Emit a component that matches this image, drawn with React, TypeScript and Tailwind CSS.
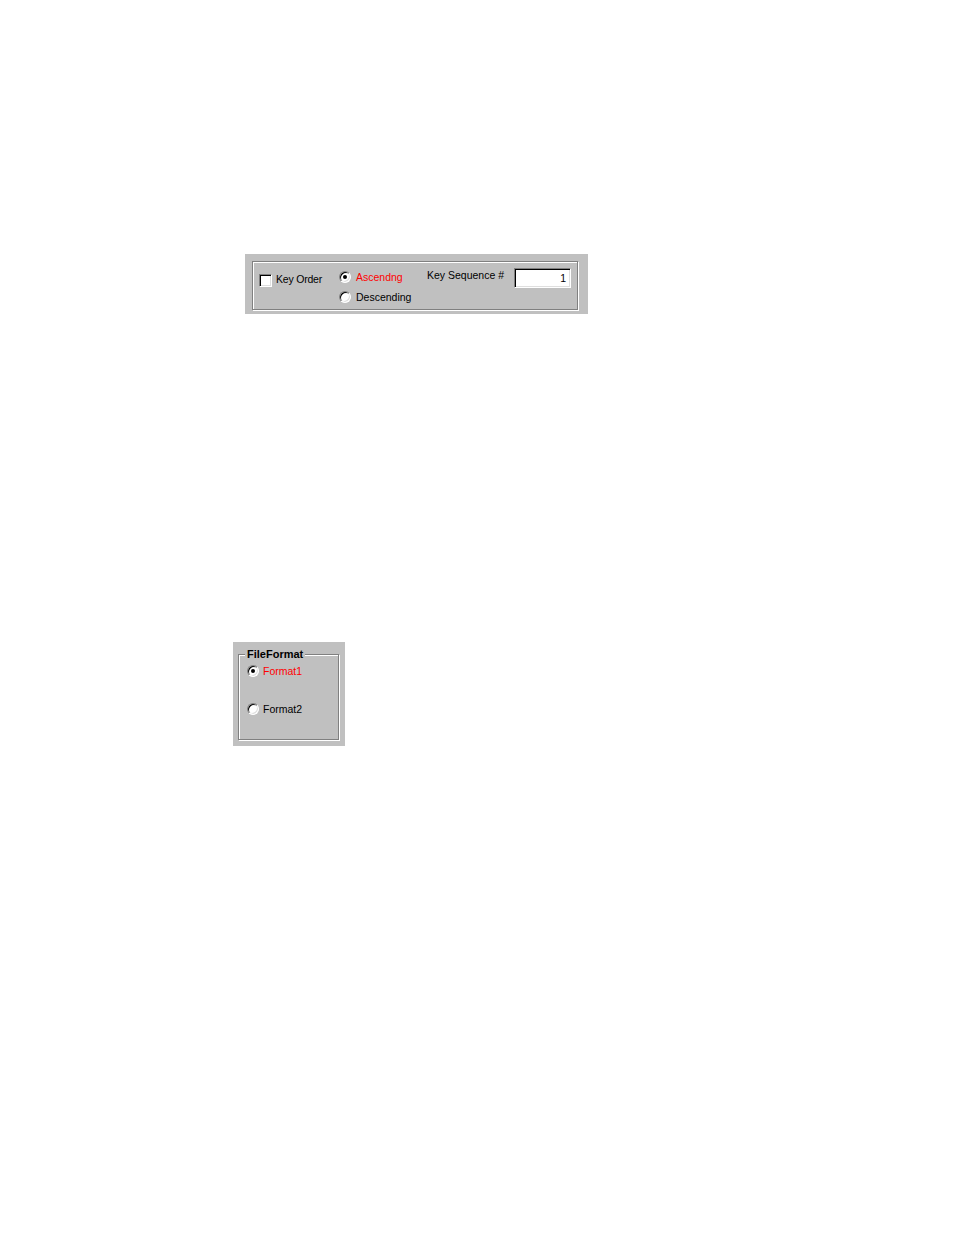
import React from 'react';

const etched = 'border border-[#808080] shadow-[inset_1px_1px_0_#ffffff,1px_1px_0_#ffffff]';
const sunken =
  'border border-t-[#808080] border-l-[#808080] border-r-white border-b-white bg-white shadow-[inset_1px_1px_0_#000000,inset_-1px_-1px_0_#dfdfdf]';

function Radio({ checked }: { checked?: boolean }) {
  return (
    <span
      className={`flex h-[12px] w-[12px] shrink-0 items-center justify-center rounded-full ${sunken}`}
    >
      {checked && <span className="h-[4px] w-[4px] rounded-full bg-black" />}
    </span>
  );
}

function Checkbox() {
  return <span className={`block h-[13px] w-[13px] shrink-0 ${sunken}`} />;
}

export default function App() {
  return (
    <div className="min-h-[1235px] w-[954px] bg-white font-['Liberation_Sans',Arial,sans-serif] text-[10.5px] leading-[12px] text-black">
      {/* Key order panel */}
      <div className="pl-[245px] pt-[254px]">
        <div className="h-[60px] w-[343px] bg-[#c0c0c0] pl-[7px] pt-[7px]">
          <div className={`flex h-[49px] w-[326px] items-start pl-[6px] ${etched}`}>
            <div className="mt-[11px] flex w-[80px] items-center gap-[4px]">
              <Checkbox />
              <span className="pb-[3px] tracking-[-0.2px]">Key Order</span>
            </div>
            <div className="mt-[9px] flex w-[88px] flex-col gap-[8px]">
              <div className="flex h-[12px] items-center gap-[5px]">
                <Radio checked />
                <span className="pb-[1px] text-[#ff0000]">Ascendng</span>
              </div>
              <div className="flex h-[12px] items-center gap-[5px]">
                <Radio />
                <span>Descending</span>
              </div>
            </div>
            <div className="mt-[6px] flex h-[14px] w-[87px] items-center">Key Sequence #</div>
            <div className={`mt-[6px] flex h-[20px] w-[57px] items-center justify-end pr-[4px] ${sunken}`}>
              1
            </div>
          </div>
        </div>
      </div>

      {/* File format panel */}
      <div className="pl-[233px] pt-[328px]">
        <div className="h-[104px] w-[112px] bg-[#c0c0c0] pl-[5px] pt-[12px]">
          <div className={`relative h-[86px] w-[101px] ${etched}`}>
            <span className="absolute left-[6px] top-[-7px] bg-[#c0c0c0] px-[2px] text-[11px] font-bold leading-[13px]">
              FileFormat
            </span>
            <div className="flex flex-col gap-[26px] pl-[8px] pt-[10px]">
              <div className="flex h-[12px] items-center gap-[4px]">
                <Radio checked />
                <span className="pb-[1px] text-[#ff0000]">Format1</span>
              </div>
              <div className="flex h-[12px] items-center gap-[4px]">
                <Radio />
                <span className="pb-[1px]">Format2</span>
              </div>
            </div>
          </div>
        </div>
      </div>
    </div>
  );
}
